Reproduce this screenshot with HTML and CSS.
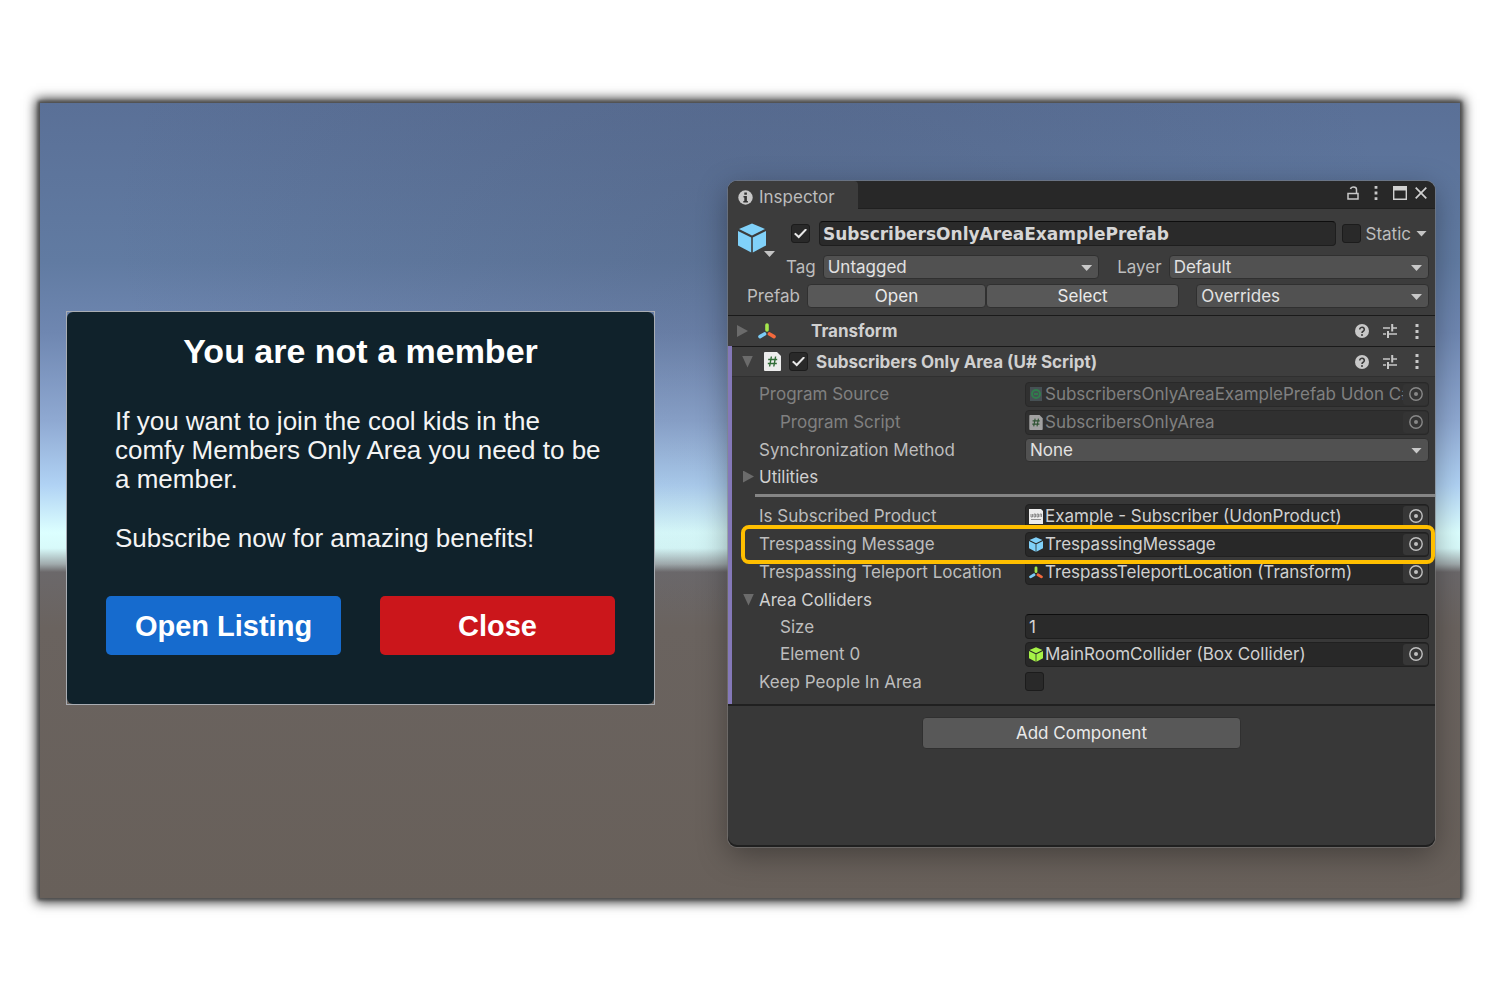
FILE: index.html
```html
<!DOCTYPE html>
<html lang="en">
<head>
<meta charset="utf-8">
<title>Subscribers Only Area</title>
<meta name="viewport" content="width=device-width, initial-scale=1">
<link rel="stylesheet" href="styles.css">
</head>
<body>
<svg class="sprite" aria-hidden="true">
  <symbol id="cube" viewBox="0 0 28 29">
    <path d="M14 0 27 5.500 14 12 1 5.500z"/><path d="M0 7.500 13.200 14v15L0 22z"/><path d="M28 7.500 14.800 14v15L28 22z"/>
  </symbol>
  <symbol id="axes" viewBox="0 0 18 16">
    <path d="M9 2v5" stroke="#a4e64c" stroke-width="3.600" stroke-linecap="round"/>
    <path d="M6.500 11 2 13.600" stroke="#7bcbf5" stroke-width="3.600" stroke-linecap="round"/>
    <path d="M11.500 11 16 13.600" stroke="#f4693c" stroke-width="3.600" stroke-linecap="round"/>
  </symbol>
  <symbol id="script" viewBox="0 0 17 19">
    <path d="M1 0h12l4 4v14a1 1 0 0 1-1 1H1a1 1 0 0 1-1-1V1a1 1 0 0 1 1-1z" fill="#ececec"/>
    <path d="M7.400 4.500 5.600 14.500M11.600 4.500 9.800 14.500M4.200 7.500h9M3.800 11.500h9" stroke="#2f6b35" stroke-width="1.400" fill="none"/>
  </symbol>
  <symbol id="help" viewBox="0 0 14 14">
    <circle cx="7" cy="7" r="7" fill="#c8c8c8"/>
    <path d="M4.700 5.400a2.300 2.100 0 1 1 3.500 1.800C7.300 7.700 7 8 7 8.900" stroke="#3a3a3a" stroke-width="1.600" fill="none"/><circle cx="7" cy="11" r="1" fill="#3a3a3a"/>
  </symbol>
  <symbol id="preset" viewBox="0 0 14 14">
    <path d="M0 4h7M10 4h4M0 10h3M6 10h8" stroke="#c8c8c8" stroke-width="1.400"/><path d="M9.200 0v7.500M5 7v7" stroke="#c8c8c8" stroke-width="2"/>
  </symbol>
  <symbol id="more" viewBox="0 0 4 15">
    <path d="M.5 0h3v3h-3zM.5 6h3v3h-3zM.5 12h3v3h-3z" fill="#c8c8c8"/>
  </symbol>
  <symbol id="target" viewBox="0 0 14 14">
    <circle cx="7" cy="7" r="6.200" fill="none" stroke="#c0c0c0" stroke-width="1.400"/><circle cx="7" cy="7" r="2" fill="#c0c0c0"/>
  </symbol>
</svg>

<main class="scene">
  <section class="notice" aria-labelledby="notice-title">
    <div class="notice-card">
      <h1 id="notice-title">You are not a member</h1>
      <div class="notice-text">
        <p>If you want to join the cool kids in the<br>comfy Members Only Area you need to be<br>a member.</p>
        <p>Subscribe now for amazing benefits!</p>
      </div>
      <div class="notice-actions">
        <button class="action action-open" type="button">Open Listing</button>
        <button class="action action-close" type="button">Close</button>
      </div>
    </div>
  </section>

  <section class="inspector" aria-label="Inspector">
    <header class="tabs">
      <div class="tab">
        <svg width="15" height="15" viewBox="0 0 15 15" aria-hidden="true"><circle cx="7.500" cy="7.500" r="7.200" fill="#c8c8c8"/><path d="M6.300 2.500h2.600v2.300H6.300zM5.500 6h3.400v5h1v1.500H5.300V11h1V7.400h-.8z" fill="#333"/></svg>
        <span>Inspector</span>
      </div>
      <div class="window-tools">
        <button class="plain" type="button" aria-label="Lock"><svg width="12" height="14" viewBox="0 0 12 14"><path d="M1 7.500h10v5.500H1zM9.500 7V3.500Q9.500 1 6.500 1 4 1 3.500 3" fill="none" stroke="#c8c8c8" stroke-width="1.500"/></svg></button>
        <button class="plain" type="button" aria-label="Menu"><svg width="4" height="14"><use href="#more"/></svg></button>
        <button class="plain" type="button" aria-label="Maximize"><svg width="14" height="14" viewBox="0 0 14 14"><path d="M.7.700h12.600v12.600H.7z" fill="none" stroke="#d0d0d0" stroke-width="1.400"/><path d="M0 0h14v4.500H0z" fill="#d0d0d0"/></svg></button>
        <button class="plain" type="button" aria-label="Close window"><svg width="12" height="12" viewBox="0 0 12 12"><path d="m.7.700 10.600 10.600M11.300.700.700 11.300" stroke="#d0d0d0" stroke-width="1.700"/></svg></button>
      </div>
    </header>

    <div class="object">
      <button class="plain object-icon" type="button" aria-label="Icon">
        <svg width="28" height="30" fill="#80d1f9"><use href="#cube"/></svg>
        <span class="caret"></span>
      </button>
      <div class="object-rows">
        <div class="row-name">
          <input class="check" type="checkbox" checked aria-label="Active">
          <input class="text name" type="text" value="SubscribersOnlyAreaExamplePrefab" aria-label="Name">
          <label class="static"><input class="check" type="checkbox"> Static <span class="caret"></span></label>
        </div>
        <div class="row-tag">
          <label for="tag">Tag</label>
          <span class="drop drop-tag"><select id="tag"><option>Untagged</option></select></span>
          <label class="layer-label" for="layer">Layer</label>
          <span class="drop drop-layer"><select id="layer"><option>Default</option></select></span>
        </div>
      </div>
      <div class="row-prefab">
        <span class="prefab-label">Prefab</span>
        <button class="push push-open" type="button">Open</button>
        <button class="push push-select" type="button">Select</button>
        <span class="drop drop-over"><select aria-label="Overrides"><option>Overrides</option></select></span>
      </div>
    </div>

    <div class="component-head">
      <span class="fold"></span>
      <svg class="axes-big" width="18" height="16" fill="none"><use href="#axes"/></svg>
      <h2 class="transform-title">Transform</h2>
      <div class="head-tools">
        <button class="plain" type="button" aria-label="Transform help"><svg width="14" height="14"><use href="#help"/></svg></button>
        <button class="plain" type="button" aria-label="Transform presets"><svg width="14" height="14"><use href="#preset"/></svg></button>
        <button class="plain" type="button" aria-label="Transform menu"><svg width="4" height="15"><use href="#more"/></svg></button>
      </div>
    </div>

    <div class="override">
      <div class="component-head script-head">
        <span class="fold fold-open"></span>
        <svg width="17" height="19"><use href="#script"/></svg>
        <input class="check" type="checkbox" checked aria-label="Enable script">
        <h2>Subscribers Only Area (U# Script)</h2>
        <div class="head-tools">
          <button class="plain" type="button" aria-label="Script help"><svg width="14" height="14"><use href="#help"/></svg></button>
          <button class="plain" type="button" aria-label="Script presets"><svg width="14" height="14"><use href="#preset"/></svg></button>
          <button class="plain" type="button" aria-label="Script menu"><svg width="4" height="15"><use href="#more"/></svg></button>
        </div>
      </div>

      <div class="fields">
        <div class="field disabled">
          <span class="label">Program Source</span>
          <div class="object-field">
            <svg width="14" height="14" viewBox="0 0 14 14"><path d="M1 0h12v14H1z" fill="#56666c"/><circle cx="7" cy="7" r="4" fill="none" stroke="#30b060" stroke-width="2"/><path d="M5 7h4" stroke="#30b060" stroke-width="2"/></svg>
            <span class="value">SubscribersOnlyAreaExamplePrefab Udon C#</span>
            <button class="picker" type="button" aria-label="Pick program source" disabled><svg width="14" height="14"><use href="#target"/></svg></button>
          </div>
        </div>
        <div class="field disabled">
          <span class="label indent">Program Script</span>
          <div class="object-field">
            <svg width="14" height="15"><use href="#script"/></svg>
            <span class="value">SubscribersOnlyArea</span>
            <button class="picker" type="button" aria-label="Pick program script" disabled><svg width="14" height="14"><use href="#target"/></svg></button>
          </div>
        </div>
        <div class="field short">
          <label class="label" for="sync">Synchronization Method</label>
          <span class="drop"><select id="sync"><option>None</option></select></span>
        </div>
        <div class="field short bright">
          <span class="label"><span class="fold"></span>Utilities</span>
        </div>
        <hr class="divider">
        <div class="field">
          <span class="label">Is Subscribed Product</span>
          <div class="object-field">
            <svg width="14" height="15" viewBox="0 0 14 15"><path d="M0 0h12l2 2v13H0z" fill="#ececec"/><path d="M2 5v3h1.500V5M5 5h1.500v3H5zM8 5h1.500v3H8zM11 8V5h1.500v3M2 10.500h10" fill="none" stroke="#777" stroke-width=".8"/></svg>
            <span class="value">Example - Subscriber (UdonProduct)</span>
            <button class="picker" type="button" aria-label="Pick product"><svg width="14" height="14"><use href="#target"/></svg></button>
          </div>
        </div>
        <div class="field highlighted">
          <span class="label">Trespassing Message</span>
          <div class="object-field">
            <svg width="14" height="15" fill="#80d1f9"><use href="#cube"/></svg>
            <span class="value">TrespassingMessage</span>
            <button class="picker" type="button" aria-label="Pick message"><svg width="14" height="14"><use href="#target"/></svg></button>
          </div>
        </div>
        <div class="field">
          <span class="label">Trespassing Teleport Location</span>
          <div class="object-field">
            <svg width="14" height="13" fill="none"><use href="#axes"/></svg>
            <span class="value">TrespassTeleportLocation (Transform)</span>
            <button class="picker" type="button" aria-label="Pick teleport location"><svg width="14" height="14"><use href="#target"/></svg></button>
          </div>
        </div>
        <div class="field short bright">
          <span class="label"><span class="fold fold-open"></span>Area Colliders</span>
        </div>
        <div class="field short">
          <label class="label indent" for="size">Size</label>
          <input class="text" id="size" type="text" value="1">
        </div>
        <div class="field">
          <span class="label indent">Element 0</span>
          <div class="object-field">
            <svg width="14" height="15" fill="#a6f247"><use href="#cube"/></svg>
            <span class="value">MainRoomCollider (Box Collider)</span>
            <button class="picker" type="button" aria-label="Pick collider"><svg width="14" height="14"><use href="#target"/></svg></button>
          </div>
        </div>
        <div class="field short">
          <label class="label" for="keep">Keep People In Area</label>
          <input class="check" id="keep" type="checkbox">
        </div>
      </div>
    </div>

    <footer class="add">
      <button class="push push-add" type="button">Add Component</button>
    </footer>
  </section>
</main>
</body>
</html>
```
FILE: styles.css
```css
* { box-sizing: border-box; }

body {
  margin: 0;
  background: #fff;
  font-family: Inter, "Liberation Sans", sans-serif;
  font-size: 17px;
  line-height: 24px;
  color: #bdbdbd;
}

button, input, select { font: inherit; color: inherit; margin: 0; }
h1, h2, p { margin: 0; }
svg { display: block; flex: none; }
.sprite { position: absolute; width: 0; height: 0; }

.scene {
  min-height: calc(100vh - 205px);
  margin: 103px 40px 102px;
  padding: 78px 25px 50px 26px;
  display: grid;
  grid-template-columns: 589fr 707fr;
  column-gap: 73px;
  align-items: start;
  background:
    radial-gradient(ellipse 45% 50% at 50% 15%, rgba(70, 80, 105, .25), transparent),
    linear-gradient(#5a7097 0%, #617ba2 20%, #6f87b1 29%, #8fa9d2 40%, #b0d2f4 48%, #dcffff 54%, #d8fafa 56%, #a0aaac 58%, #6b686a 59%, #6a635f 66%, #68605a 100%);
  box-shadow: 0 0 3px 2px #505050, 0 0 11px 4px rgba(0, 0, 0, .8);
}

/* Membership notice */
.notice { margin-top: 130px; border: 1px solid #a9adb3; }
.notice-card {
  min-height: 392px;
  padding: 19px 39px 49px;
  border-radius: 6px;
  background: #10222b;
  color: #fff;
  font-family: "Liberation Sans", Arial, sans-serif;
}
.notice h1 { font-size: 34px; line-height: 40px; text-align: center; }
.notice-text { margin: 36px 0 43px; padding-left: 9px; font-size: 26px; line-height: 29px; color: #f4f4f4; }
.notice-text p + p { margin-top: 30px; }
.notice-actions { display: grid; grid-template-columns: 1fr 1fr; gap: 39px; }
.action { height: 59px; border: 0; border-radius: 5px; font-size: 29px; font-weight: 700; }
.action-open { background: #166bce; }
.action-close { background: #cb161b; }

/* Inspector window */
.inspector {
  min-height: 666px;
  border-radius: 9px;
  background: #383838;
  overflow: hidden;
  box-shadow: inset 0 -2px #202020, 0 0 0 1px rgba(130, 130, 130, .5), 0 8px 30px rgba(0, 0, 0, .35);
}
.tabs { height: 28px; display: flex; justify-content: space-between; background: #282828; border-bottom: 1px solid #202020; }
.tab { height: 28px; width: 130px; padding: 4px 10px 0; display: flex; align-items: center; gap: 6px; background: #3c3c3c; border-radius: 0 4px 0 0; }
.window-tools { display: flex; align-items: center; padding: 0 8px 3px 0; gap: 15px; }
.window-tools button:last-child { margin-left: -7px; }
.plain { padding: 0; border: 0; background: none; }
.caret { width: 11px; height: 6px; flex: none; background: #c4c4c4; clip-path: polygon(0 0, 100% 0, 50% 100%); }

.object { padding: 12px 6px 7px 7px; background: #3c3c3c; display: grid; grid-template-columns: 48px 1fr; }
.object-icon { display: grid; align-content: start; padding: 2px 0 0 3px; }
.object-icon .caret { margin-left: 26px; margin-top: -2px; }
.row-name { display: flex; align-items: center; padding-left: 8px; gap: 9px; }
.name { flex: 1; font-weight: 700; font-family: "DejaVu Sans", Inter, sans-serif; }
.static { display: flex; align-items: center; gap: 5px; padding-right: 2px; margin-left: -3px; }
.row-tag { display: flex; align-items: center; margin-top: 9px; gap: 7px; padding-left: 3px; }
.drop-tag { flex: 275; }
.drop-layer { flex: 259; }
.layer-label { margin-left: 11px; }
.row-prefab { grid-column: 1 / 3; display: flex; margin-top: 5px; }
.prefab-label { width: 72px; padding-left: 12px; }
.push-open { flex: 178; }
.push-select { flex: 192; }
.drop-over { flex: 234; margin-left: 17px; }

.check {
  appearance: none;
  flex: none;
  width: 19px;
  height: 19px;
  display: grid;
  place-items: center;
  border: 1px solid #1c1c1c;
  border-radius: 3px;
  background: #292929;
}
.check:checked::before {
  content: "";
  width: 13px;
  height: 10px;
  background: #e8e8e8;
  clip-path: polygon(0 55%, 12% 42%, 36% 70%, 88% 0, 100% 12%, 37% 100%);
}
.text { min-width: 0; width: 100%; height: 25px; padding: 0 3px; border: 1px solid #1e1e1e; border-top-color: #0d0d0d; border-radius: 4px; background: #2a2a2a; color: #d6d6d6; }

.drop { position: relative; min-width: 0; display: block; }
.drop::after { content: ""; position: absolute; right: 7px; top: 10px; width: 11px; height: 6px; background: #c8c8c8; clip-path: polygon(0 0, 100% 0, 50% 100%); pointer-events: none; }
.drop select { appearance: none; display: block; width: 100%; height: 24px; padding: 0 24px 0 4px; border: 1px solid #303030; border-radius: 4px; background: #515151; color: #e2e2e2; line-height: 22px; }
.push { height: 24px; padding: 0; border: 1px solid #303030; border-radius: 4px; background: #585858; color: #eaeaea; line-height: 22px; }

.component-head { height: 31px; padding: 0 16px 0 9px; display: flex; align-items: center; border-top: 1px solid #1a1a1a; background: #3e3e3e; }
.component-head h2 { font-size: 17px; font-weight: 700; color: #d0d0d0; }
.fold { width: 11px; height: 12px; flex: none; background: #6b6b6b; clip-path: polygon(0 0, 100% 50%, 0 100%); }
.fold-open { clip-path: polygon(0 0, 100% 0, 50% 100%); }
.axes-big { margin-left: 10px; }
.transform-title { margin-left: 35px; }
.head-tools { margin-left: auto; display: flex; align-items: center; gap: 14px; }
.head-tools button:last-child { margin-left: 4px; }

.override { border-left: 4px solid #8478b8; }
.script-head { padding-left: 10px; border-bottom: 1px solid #303030; }
.script-head svg + .check { margin: 0 8px; }
.script-head .fold + svg { margin-left: 11px; }

.fields { padding: 3px 6px 9px 27px; }
.field { position: relative; height: 28px; display: grid; grid-template-columns: 266px 1fr; align-items: center; }
.field.short { height: 27px; }
.bright { color: #d0d0d0; }
.label { display: flex; align-items: center; white-space: nowrap; }
.label .fold { margin-left: -16px; margin-right: 5px; }
.indent { padding-left: 21px; }
.divider { height: 3px; margin: 4px -6px 5px -4px; border: 0; background: #858585; }
.object-field { min-width: 0; height: 25px; padding: 0 0 0 3px; display: flex; align-items: center; border: 1px solid #202020; border-radius: 4px; background: #282828; color: #d0d0d0; }
.value { flex: 1; min-width: 0; margin-left: 2px; overflow: hidden; white-space: nowrap; }
.picker { width: 25px; height: 21px; padding: 0; display: grid; place-items: center; border: 0; border-radius: 3px; background: #373737; }
.disabled { color: #808080; }
.disabled .object-field { color: #808080; background: #303030; border-color: #292929; }
.disabled svg { opacity: .6; }
.disabled .picker { background: #343434; }
.highlighted::after { content: ""; position: absolute; z-index: 1; inset: -5px -6px -6px -18px; border: 4px solid #ffbf00; border-radius: 8px; pointer-events: none; }

.add { padding: 11px 0 0; display: grid; justify-items: center; border-top: 2px solid #202020; }
.push-add { width: 45%; height: 32px; }
```
